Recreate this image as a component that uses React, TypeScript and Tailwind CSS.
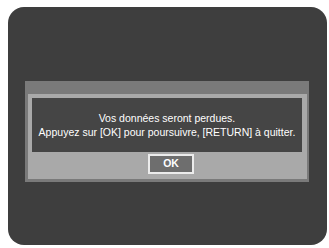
export default function App() {
  return (
    <div className="w-[329px] h-[248px] bg-white pl-[8px] pt-[7px] font-['Liberation_Sans',Arial,sans-serif]">
      <div className="w-[319px] h-[238px] rounded-[16px] bg-[#3e3e3e] pt-[74px] pl-[17px]">
        <div className="w-[284px] h-[101px] bg-[#7a7a7a] pt-[13px] pl-[3px]">
          <div className="w-[279px] h-[85px] bg-[#a9a9a9] pt-[4px] pl-[4px]">
            <div className="w-[270px] h-[54px] bg-[#454545] flex flex-col items-center justify-center text-white text-[10.5px] leading-[14px]">
              <p>Vos données seront perdues.</p>
              <p>Appuyez sur [OK] pour poursuivre, [RETURN] à quitter.</p>
            </div>
            <div className="mt-[2px] ml-[116px] w-[46px] h-[20px] border-[2px] border-[#ececec] bg-[#6e6e6e] flex items-center justify-center text-white text-[10.5px] font-bold">
              OK
            </div>
          </div>
        </div>
      </div>
    </div>
  );
}
